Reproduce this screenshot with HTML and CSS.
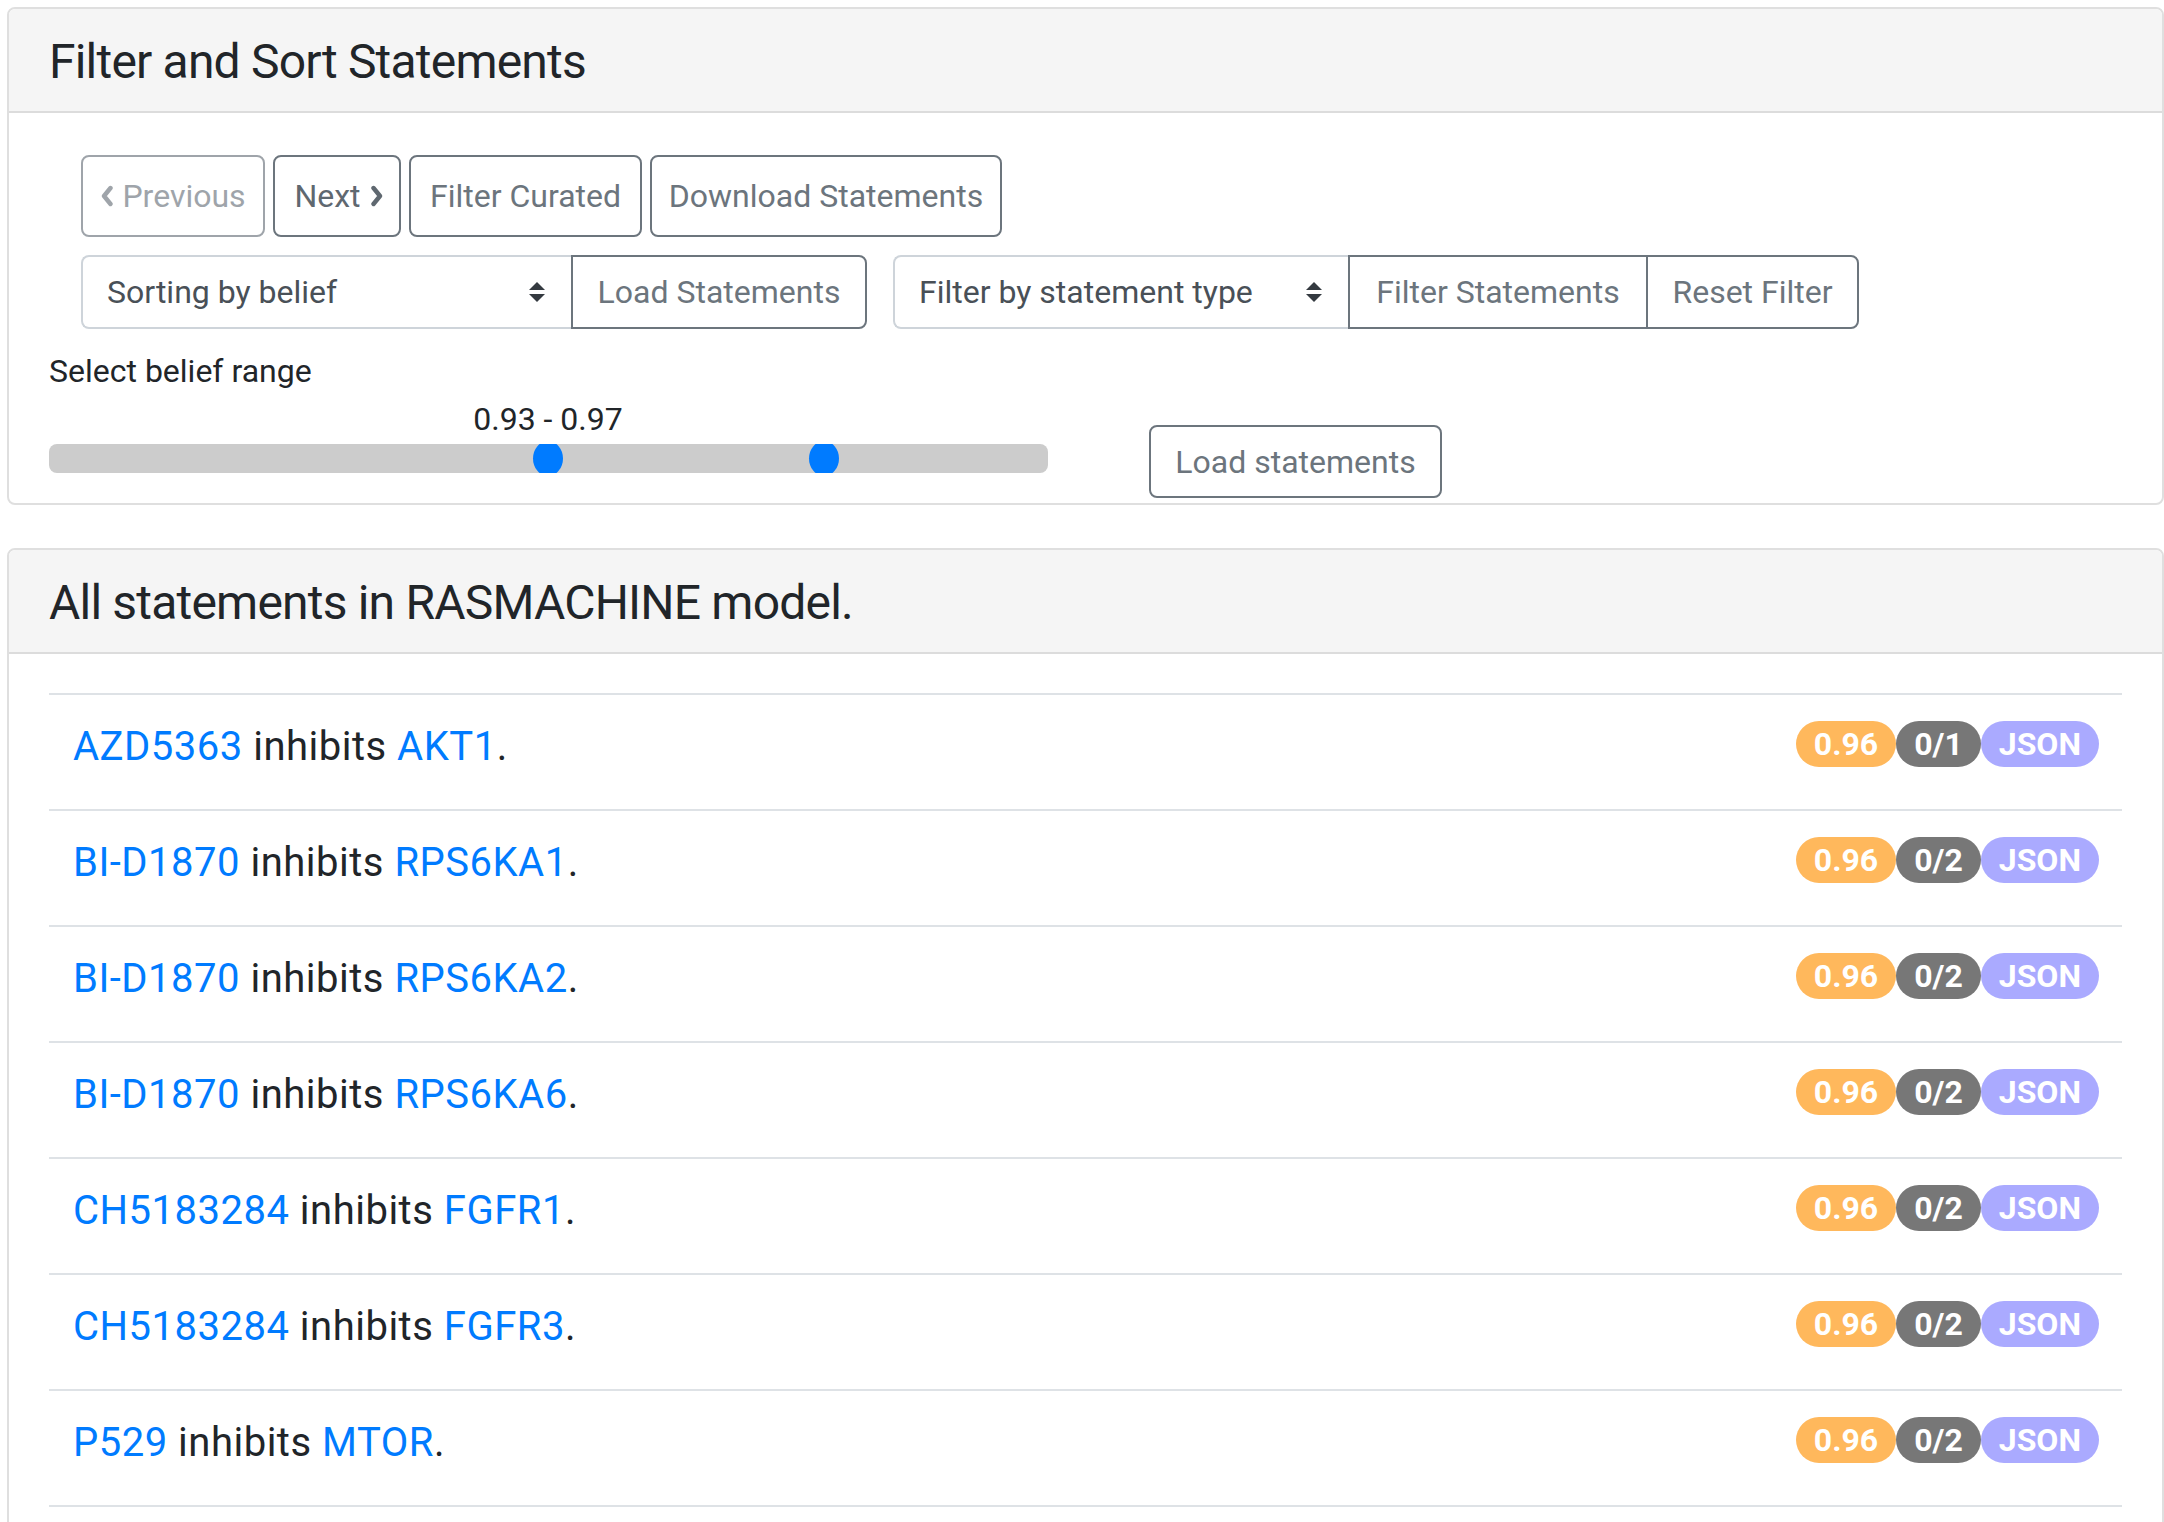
FILE: index.html
```html
<!DOCTYPE html>
<html lang="en">
<head>
<meta charset="utf-8">
<title>Filter and Sort Statements</title>
<link rel="stylesheet" href="styles.css">
</head>
<body>
<div class="page">
  <section class="card">
    <div class="card-header"><h4>Filter and Sort Statements</h4></div>
    <div class="card-body filter-body">
      <div class="btn-row">
        <button class="btn btn-prev disabled"><svg class="chev" viewBox="0 0 14 22" width="14" height="22"><polyline points="10.5,3 4,11 10.5,19" fill="none" stroke="currentColor" stroke-width="4.4" stroke-linecap="round" stroke-linejoin="round"/></svg>Previous</button>
        <button class="btn btn-next">Next<svg class="chev chev-r" viewBox="0 0 14 22" width="14" height="22"><polyline points="3.5,3 10,11 3.5,19" fill="none" stroke="currentColor" stroke-width="4.4" stroke-linecap="round" stroke-linejoin="round"/></svg></button>
        <button class="btn btn-curated">Filter Curated</button>
        <button class="btn btn-download">Download Statements</button>
      </div>
      <div class="control-row">
        <div class="input-group">
          <div class="select select-sort">Sorting by belief<svg class="sel-arrow" viewBox="0 0 4 5" width="16" height="20"><path d="M2 0L0 2h4zm0 5L0 3h4z" fill="#343a40"/></svg></div>
          <button class="btn btn-append btn-load">Load Statements</button>
        </div>
        <div class="input-group group-type">
          <div class="select select-type">Filter by statement type<svg class="sel-arrow" viewBox="0 0 4 5" width="16" height="20"><path d="M2 0L0 2h4zm0 5L0 3h4z" fill="#343a40"/></svg></div>
          <button class="btn btn-mid btn-filter">Filter Statements</button>
          <button class="btn btn-append btn-reset">Reset Filter</button>
        </div>
      </div>
      <div class="range-row">
        <div class="range-col">
          <div class="range-label">Select belief range</div>
          <div class="slider">
            <div class="range-value" style="left: 499px">0.93 - 0.97</div>
            <div class="track">
              <span class="handle" style="left: 499px"></span>
              <span class="handle" style="left: 775px"></span>
            </div>
          </div>
        </div>
        <button class="btn btn-range-load">Load statements</button>
      </div>
    </div>
  </section>

  <section class="card card-list">
    <div class="card-header"><h4>All statements in RASMACHINE model.</h4></div>
    <div class="card-body list-body">
      <ul class="stmt-list">
        <li class="stmt"><span class="stmt-text"><a href="#">AZD5363</a> inhibits <a href="#">AKT1</a>.</span><span class="badges"><span class="badge b-belief">0.96</span><span class="badge b-count">0/1</span><span class="badge b-json">JSON</span></span></li>
        <li class="stmt"><span class="stmt-text"><a href="#">BI-D1870</a> inhibits <a href="#">RPS6KA1</a>.</span><span class="badges"><span class="badge b-belief">0.96</span><span class="badge b-count">0/2</span><span class="badge b-json">JSON</span></span></li>
        <li class="stmt"><span class="stmt-text"><a href="#">BI-D1870</a> inhibits <a href="#">RPS6KA2</a>.</span><span class="badges"><span class="badge b-belief">0.96</span><span class="badge b-count">0/2</span><span class="badge b-json">JSON</span></span></li>
        <li class="stmt"><span class="stmt-text"><a href="#">BI-D1870</a> inhibits <a href="#">RPS6KA6</a>.</span><span class="badges"><span class="badge b-belief">0.96</span><span class="badge b-count">0/2</span><span class="badge b-json">JSON</span></span></li>
        <li class="stmt"><span class="stmt-text"><a href="#">CH5183284</a> inhibits <a href="#">FGFR1</a>.</span><span class="badges"><span class="badge b-belief">0.96</span><span class="badge b-count">0/2</span><span class="badge b-json">JSON</span></span></li>
        <li class="stmt"><span class="stmt-text"><a href="#">CH5183284</a> inhibits <a href="#">FGFR3</a>.</span><span class="badges"><span class="badge b-belief">0.96</span><span class="badge b-count">0/2</span><span class="badge b-json">JSON</span></span></li>
        <li class="stmt"><span class="stmt-text"><a href="#">P529</a> inhibits <a href="#">MTOR</a>.</span><span class="badges"><span class="badge b-belief">0.96</span><span class="badge b-count">0/2</span><span class="badge b-json">JSON</span></span></li>
      </ul>
    </div>
  </section>
</div>
</body>
</html>
```

FILE: styles.css
```css
* { box-sizing: border-box; }

html, body {
  margin: 0;
  background: #ffffff;
}

body {
  font-family: Roboto, "Helvetica Neue", Arial, sans-serif;
  color: #212529;
  font-size: 32px;
  line-height: 48px;
}

.page {
  padding: 7px 0 0 7px;
}

.card {
  border: 2px solid #dfdfdf;
  border-radius: 8px;
  background: #fff;
  overflow: hidden;
}

.card-header {
  background: #f5f5f5;
  border-bottom: 2px solid #dcdcdc;
  padding: 26px 40px 22px;
}

.card-header h4 {
  margin: 0;
  font-size: 48px;
  line-height: 54px;
  font-weight: 400;
  letter-spacing: -0.8px;
  color: #212529;
}

.filter-body {
  padding: 42px 40px 5px 40px;
}

/* buttons */
.btn {
  font-family: inherit;
  font-size: 32px;
  line-height: 48px;
  color: #6c757d;
  background: #fff;
  border: 2px solid #6c757d;
  border-radius: 8px;
  padding: 0 12px;
  display: inline-flex;
  align-items: center;
  justify-content: center;
  white-space: nowrap;
  cursor: pointer;
}

.btn.disabled {
  opacity: .65;
}

.btn-row {
  display: flex;
  margin-left: 32px;
  height: 82px;
}

.btn-row .btn {
  height: 82px;
  margin-right: 8px;
}

.btn-prev { width: 184px; }
.btn-next { width: 128px; }
.btn-curated { width: 233px; }
.btn-download { width: 352px; }

.chev {
  flex-shrink: 0;
  width: 14px;
  height: 22px;
}
.btn-prev .chev { margin-right: 8px; }
.btn-next .chev { margin-left: 9px; }
.btn-next { color: #5f6870; padding-right: 8px; }

/* selects + input groups */
.control-row {
  display: flex;
  margin: 18px 0 0 32px;
  height: 74px;
}

.input-group {
  display: flex;
  height: 74px;
}

.group-type {
  margin-left: 26px;
}

.select {
  position: relative;
  height: 74px;
  border: 2px solid #ced4da;
  border-right: 0;
  border-radius: 8px 0 0 8px;
  color: #495057;
  padding: 0 24px;
  display: flex;
  align-items: center;
  background: #fff;
}

.sel-arrow {
  position: absolute;
  right: 26px;
  top: 25px;
}

.select-sort { width: 490px; }
.select-type { width: 455px; }

.input-group .btn {
  height: 74px;
}

.btn-append {
  border-radius: 0 8px 8px 0;
}

.btn-mid {
  border-radius: 0;
  border-right: 0;
}

.btn-load { width: 296px; }
.btn-filter { width: 298px; }
.btn-reset { width: 213px; }

/* range */
.range-row {
  display: flex;
  align-items: flex-start;
  margin-top: 18px;
}

.range-col {
  width: 999px;
}

.range-label {
  height: 48px;
  line-height: 48px;
}

.slider {
  position: relative;
  padding-top: 49px;
}

.range-value {
  position: absolute;
  top: 0;
  transform: translateX(-50%);
  line-height: 48px;
  white-space: nowrap;
}

.track {
  position: relative;
  height: 29px;
  background: #cccccc;
  border-radius: 8px;
  overflow: hidden;
}

.handle {
  position: absolute;
  top: -3px;
  width: 30px;
  height: 35px;
  margin-left: -15px;
  background: #007bff;
  border-radius: 50%;
}

.btn-range-load {
  margin: 78px 0 0 101px;
  width: 293px;
  height: 73px;
}

/* statements list */
.card-list {
  margin-top: 43px;
}

.list-body {
  padding: 39px 40px 60px 40px;
}

.stmt-list {
  list-style: none;
  margin: 0;
  padding: 0;
}

.stmt {
  display: flex;
  justify-content: space-between;
  align-items: flex-start;
  border-top: 2px solid #dee2e6;
  padding: 22px 23px 32px 24px;
  font-size: 40px;
  line-height: 60px;
  letter-spacing: 0.5px;
}

.stmt:last-child {
  border-bottom: 2px solid #dee2e6;
}

.stmt a {
  color: #007bff;
  text-decoration: none;
}

.badges {
  display: flex;
  margin-top: 4px;
  letter-spacing: 0;
}

.badge {
  display: inline-block;
  height: 46px;
  line-height: 46px;
  border-radius: 23px;
  padding: 0 18px;
  font-size: 32px;
  font-weight: 700;
  color: #fff;
}

.b-belief { background: #ffb85c; }
.b-count { background: #777777; }
.b-json { background: #aaaaff; }
```
